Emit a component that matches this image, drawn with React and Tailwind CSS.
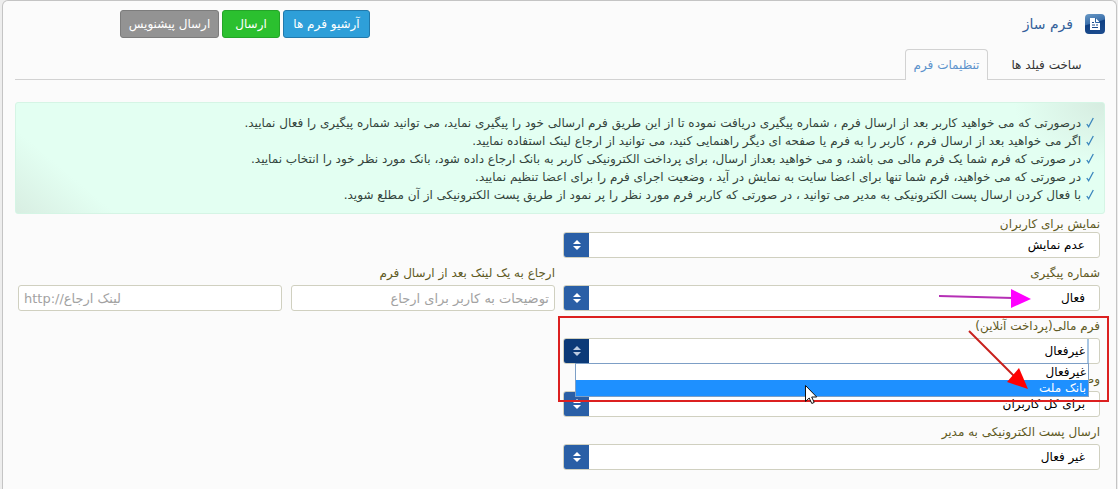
import React, { useState } from 'react';

// --- Constants & Data ---
const TABS = [
  { key: 'fields', label: 'ساخت فیلد ها' },
  { key: 'settings', label: 'تنظیمات فرم' },
];

const NOTES = [
  'درصورتی که می خواهید کاربر بعد از ارسال فرم ، شماره پیگیری دریافت نموده تا از این طریق فرم ارسالی خود را پیگیری نماید، می توانید شماره پیگیری را فعال نمایید.',
  'اگر می خواهید بعد از ارسال فرم ، کاربر را به فرم یا صفحه ای دیگر راهنمایی کنید، می توانید از ارجاع لینک استفاده نمایید.',
  'در صورتی که فرم شما یک فرم مالی می باشد، و می خواهید بعداز ارسال، برای پرداخت الکترونیکی کاربر به بانک ارجاع داده شود، بانک مورد نظر خود را انتخاب نمایید.',
  'در صورتی که می خواهید، فرم شما تنها برای اعضا سایت به نمایش در آید ، وضعیت اجرای فرم را برای اعضا تنظیم نمایید.',
  'با فعال کردن ارسال پست الکترونیکی به مدیر می توانید ، در صورتی که کاربر فرم مورد نظر را پر نمود از طریق پست الکترونیکی از آن مطلع شوید.',
];

const PAYMENT_OPTIONS = ['غیرفعال', 'بانک ملت'];

const FormIcon = () => (
  <svg className="w-5 h-5 shrink-0" viewBox="0 0 20 20" aria-hidden="true">
    <defs>
      <linearGradient id="tile" x1="0" y1="0" x2="0.3" y2="1">
        <stop offset="0" stopColor="#6b9ac6" />
        <stop offset="0.5" stopColor="#3a6fab" />
        <stop offset="0.55" stopColor="#0f3f82" />
        <stop offset="1" stopColor="#1a4a8c" />
      </linearGradient>
    </defs>
    <rect width="20" height="20" rx="4" fill="url(#tile)" />
    <path d="M5 4h5.500L15 8.500V16H5z" fill="#fff" />
    <path d="M10.500 4v4.500H15" fill="none" stroke="#2c62a0" />
    <path d="M7 8.500h2M7 11h3M11 11h2M7 13.500h6" stroke="#1a4a8c" />
  </svg>
);

const Check = () => (
  <svg className="w-2 h-3 shrink-0" viewBox="0 0 8 12" aria-hidden="true">
    <path d="M.8 7 2.600 9.700 7.300 1" fill="none" stroke="#3b86bd" strokeWidth="1.300" />
  </svg>
);

const Label = ({ id, children }) => (
  <label htmlFor={id} className="block h-4 leading-4 whitespace-nowrap text-[#5f5a24]">{children}</label>
);

const SelectField = ({ id, label, options, tight, open, children }) => (
  <div className="relative">
    <Label id={id}>{label}</Label>
    <div className={`relative flex h-[26px] rounded-[3px] border border-[#d0d0c0] bg-white ${tight ? '' : 'mt-1'}`}>
      <select
        id={id}
        className={`flex-1 min-w-0 appearance-none bg-transparent text-black focus:outline-none ${open ? 'mr-[10px] pr-[2px] border-r-2 border-[#a9c6e3]' : 'pr-[14px]'}`}
      >
        {options.map((o) => <option key={o}>{o}</option>)}
      </select>
      <span className={`flex w-[25px] items-center justify-center rounded-l-[2px] ${open ? 'bg-[#0c3a78] text-[#bccbe0]' : 'bg-[#2a5fa6] text-white'}`}>
        <svg className="w-2 h-[10px]" viewBox="0 0 8 10" fill="currentColor" aria-hidden="true">
          <path d="M4 0 8 4H0zM4 10 0 6h8z" />
        </svg>
      </span>
      {children}
    </div>
  </div>
);

const App = () => {
  const [activeTab, setActiveTab] = useState('settings');

  return (
    <div dir="rtl" className="min-h-screen flex bg-[#ededed] pl-[2px] pr-px text-[12px] font-['DejaVu_Sans',sans-serif] overflow-hidden">
      <main className="flex-1 min-w-0 rounded-t-md border border-b-0 border-[#c4c4c4] bg-[#fbfbfb] pl-3 pr-[11px] pt-[9px]">
        {/* Header */}
        <header className="flex items-center justify-between h-7">
          <div className="flex items-center gap-3">
            <FormIcon />
            <h1 className="text-[14px] text-[#33619a]">فرم ساز</h1>
          </div>
          <div className="flex gap-[3px] ml-[105px] text-white">
            <button className="h-7 w-[87px] rounded-[3px] border border-[#2279ab] bg-[#2e9fd9] whitespace-nowrap">آرشیو فرم ها</button>
            <button className="h-7 w-[58px] rounded-[3px] border border-[#24a428] bg-[#2bc02f]">ارسال</button>
            <button className="h-7 w-[99px] rounded-[3px] border border-[#7c7c7c] bg-[#939393] whitespace-nowrap">ارسال پیشنویس</button>
          </div>
        </header>

        {/* Tabs */}
        <nav className="flex mt-[11px] border-b border-[#d2d2d2]">
          {TABS.map((tab) => (
            <button
              key={tab.key}
              onClick={() => setActiveTab(tab.key)}
              className={`h-[31px] -mb-px rounded-t border border-b-0 ${
                activeTab === tab.key
                  ? 'w-[83px] border-[#d2d2d2] bg-[#fbfbfb] text-[#5d93cc]'
                  : 'w-[117px] border-transparent text-[#333]'
              }`}
            >
              {tab.label}
            </button>
          ))}
        </nav>

        {/* Help notes */}
        <ul className="mt-[22px] rounded-[3px] border border-[#d5f5e5] bg-[#e3fff2] bg-[radial-gradient(ellipse_90px_60px_at_100%_0%,#d6ece0,transparent),linear-gradient(40deg,#d8eee2,transparent_64px)] px-[10px] pt-[11px] pb-[9px] text-[#33443c]">
          {NOTES.map((note) => (
            <li key={note} className="flex items-center gap-[5px] h-[18px] whitespace-nowrap">
              <Check />
              {note}
            </li>
          ))}
        </ul>

        {/* Settings form */}
        <form className="pt-[2px] pr-[5px] pl-[3px] pb-5 space-y-[7px]">
          <div className="grid grid-cols-2 gap-2">
            <SelectField id="visible" label="نمایش برای کاربران" options={['عدم نمایش', 'نمایش']} tight />
          </div>

          <div className="grid grid-cols-2 gap-2">
            <SelectField id="tracking" label="شماره پیگیری" options={['فعال', 'غیرفعال']}>
              <svg className="absolute right-[68px] top-[2px] w-[92px] h-5 pointer-events-none" viewBox="0 0 92 20" aria-hidden="true">
                <path d="M0 8 74 10" stroke="#b52fb5" strokeWidth="2" />
                <path d="M72 1 92 11 72 20z" fill="#ff00ff" />
              </svg>
            </SelectField>
            <div>
              <Label id="note">ارجاع به یک لینک بعد از ارسال فرم</Label>
              <div className="grid grid-cols-2 gap-[9px] mt-1">
                <input id="note" type="text" placeholder="توضیحات به کاربر برای ارجاع" className="min-w-0 h-[26px] rounded-[3px] border border-[#d0d0c0] bg-white px-[5px] text-[13px] placeholder:text-[#a2a2a2]" />
                <input aria-label="لینک ارجاع" dir="ltr" type="text" placeholder="http://لینک ارجاع" className="min-w-0 h-[26px] rounded-[3px] border border-[#d0d0c0] bg-white px-[5px] text-[13px] placeholder:text-[#a2a2a2]" />
              </div>
            </div>
          </div>

          <div className="grid grid-cols-2 gap-2">
            <SelectField id="payment" label="فرم مالی(پرداخت آنلاین)" options={PAYMENT_OPTIONS} open>
              <ul role="listbox" className="absolute z-10 top-[24px] right-[10px] left-[11px] border border-[#7d9fc6] bg-white">
                {PAYMENT_OPTIONS.map((o, i) => (
                  <li key={o} role="option" aria-selected={i === 1} className={`h-4 leading-4 px-[2px] ${i === 1 ? 'bg-[#1e90ff] text-white' : 'text-black'}`}>
                    {o}
                  </li>
                ))}
              </ul>
              <div className="absolute z-20 -top-[23px] -right-[10px] -left-[6px] h-[86px] border-2 border-[#dc2020] pointer-events-none" />
              <svg className="absolute z-20 right-[71px] -top-[9px] w-[60px] h-[60px] pointer-events-none" viewBox="0 0 60 60" aria-hidden="true">
                <path d="M1 1 46 46" stroke="#c8201c" strokeWidth="2" />
                <path d="M60 59 39 52 51 38z" fill="#ff0000" />
              </svg>
              <svg className="absolute z-20 right-[282px] top-[46px] w-3 h-[19px] pointer-events-none" viewBox="0 0 12 19" aria-hidden="true">
                <path d="M.5.500v16l3.700-3.500 2.600 5.500 2.400-1.100L6.700 12h5z" fill="#fff" stroke="#111" />
              </svg>
            </SelectField>
          </div>

          <div className="grid grid-cols-2 gap-2">
            <SelectField id="access" label="وضعیت اجرای فرم" options={['برای کل کاربران', 'برای اعضا']} />
          </div>

          <div className="grid grid-cols-2 gap-2">
            <SelectField id="email" label="ارسال پست الکترونیکی به مدیر" options={['غیر فعال', 'فعال']} />
          </div>
        </form>
      </main>
    </div>
  );
};

export default App;
